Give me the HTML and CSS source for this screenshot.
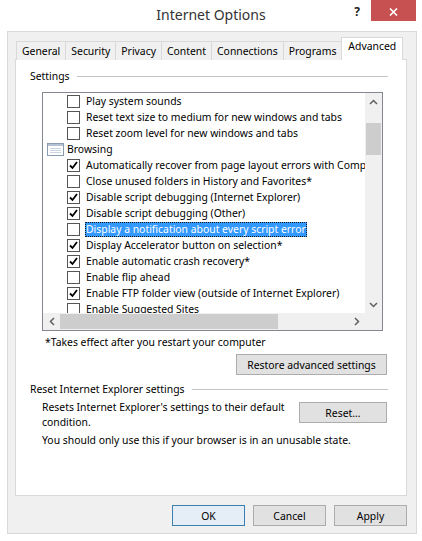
FILE: index.html
```html
<!DOCTYPE html>
<html lang="en">
<head>
    <meta charset="UTF-8">
    <title>Internet Options</title>
    <link rel="stylesheet" href="styles.css">
</head>
<body>
    <div class="window">
        <div class="titlebar">
            <div></div>
            <div class="title">Internet Options</div>
            <div class="caption">
                <span class="help">?</span>
                <span class="close">
                    <svg width="9" height="8" viewBox="0 0 9 8"><path d="M1 0.5 L8 7.5 M8 0.5 L1 7.5" stroke="#fff" stroke-width="1.6" fill="none"/></svg>
                </span>
            </div>
        </div>

        <div class="client">
            <div class="tabs">
                <div class="tab">General</div>
                <div class="tab">Security</div>
                <div class="tab">Privacy</div>
                <div class="tab">Content</div>
                <div class="tab">Connections</div>
                <div class="tab">Programs</div>
                <div class="tab active">Advanced</div>
            </div>

            <div class="panel">
                <div class="group-label"><span>Settings</span><span class="rule"></span></div>

                <div class="listbox">
                    <div class="items">
                        <div class="row opt"><span class="check"></span><span class="text">Play system sounds</span></div>
                        <div class="row opt"><span class="check"></span><span class="text">Reset text size to medium for new windows and tabs</span></div>
                        <div class="row opt"><span class="check"></span><span class="text">Reset zoom level for new windows and tabs</span></div>
                        <div class="row group">
                            <svg class="folder" width="17" height="13" viewBox="0 0 17 13">
                                <rect x="0.5" y="0.5" width="16" height="12" fill="#fff" stroke="#8b9cb2"/>
                                <rect x="1" y="1" width="15" height="2" fill="#b4c2d4"/>
                                <path d="M3 5.5 H14 M3 7.5 H14 M3 9.5 H14" stroke="#c9d4e2"/>
                            </svg>
                            <span class="text">Browsing</span>
                        </div>
                        <div class="row opt"><span class="check on"></span><span class="text">Automatically recover from page layout errors with Compatibility View</span></div>
                        <div class="row opt"><span class="check"></span><span class="text">Close unused folders in History and Favorites*</span></div>
                        <div class="row opt"><span class="check on"></span><span class="text">Disable script debugging (Internet Explorer)</span></div>
                        <div class="row opt"><span class="check on"></span><span class="text">Disable script debugging (Other)</span></div>
                        <div class="row opt"><span class="check"></span><span class="text selected">Display a notification about every script error</span></div>
                        <div class="row opt"><span class="check on"></span><span class="text">Display Accelerator button on selection*</span></div>
                        <div class="row opt"><span class="check on"></span><span class="text">Enable automatic crash recovery*</span></div>
                        <div class="row opt"><span class="check"></span><span class="text">Enable flip ahead</span></div>
                        <div class="row opt"><span class="check on"></span><span class="text">Enable FTP folder view (outside of Internet Explorer)</span></div>
                        <div class="row opt"><span class="check"></span><span class="text">Enable Suggested Sites</span></div>
                    </div>

                    <div class="vscroll">
                        <span class="arrow"><svg width="9" height="6" viewBox="0 0 9 6"><path d="M1 5 L4.5 1.5 L8 5" stroke="#606060" stroke-width="1.5" fill="none"/></svg></span>
                        <div class="track"><div class="vthumb"></div></div>
                        <span class="arrow"><svg width="9" height="6" viewBox="0 0 9 6"><path d="M1 1 L4.5 4.5 L8 1" stroke="#606060" stroke-width="1.5" fill="none"/></svg></span>
                    </div>

                    <div class="hscroll">
                        <span class="arrow"><svg width="6" height="9" viewBox="0 0 6 9"><path d="M5 1 L1.5 4.5 L5 8" stroke="#606060" stroke-width="1.5" fill="none"/></svg></span>
                        <div class="track"><div class="hthumb"></div></div>
                        <span class="arrow"><svg width="6" height="9" viewBox="0 0 6 9"><path d="M1 1 L4.5 4.5 L1 8" stroke="#606060" stroke-width="1.5" fill="none"/></svg></span>
                    </div>
                    <div class="corner"></div>
                </div>

                <p class="note">*Takes effect after you restart your computer</p>
                <div class="restore-row">
                    <button class="btn restore">Restore advanced settings</button>
                </div>

                <div class="group-label reset-label"><span>Reset Internet Explorer settings</span><span class="rule"></span></div>
                <div class="reset-row">
                    <p class="desc">Resets Internet Explorer's settings to their default condition.</p>
                    <button class="btn reset">Reset...</button>
                </div>
                <p class="warn">You should only use this if your browser is in an unusable state.</p>
            </div>

            <div class="actions">
                <button class="btn default">OK</button>
                <button class="btn">Cancel</button>
                <button class="btn">Apply</button>
            </div>
        </div>
    </div>
</body>
</html>
```

FILE: styles.css
```css
body { margin: 0; background: #fff; font-family: "Segoe UI", "Noto Sans", sans-serif; font-size: 10.4px; color: #000; }
p { margin: 0; }
.window { width: 422px; height: 541px; }

.titlebar { height: 31px; display: grid; grid-template-columns: 1fr auto 1fr; }
.title { font-size: 14px; color: #333; line-height: 30px; }
.caption { display: flex; justify-content: flex-end; align-items: flex-start; }
.help { font-weight: bold; font-size: 12px; color: #222; line-height: 24px; margin-right: 11px; }
.close { width: 45px; height: 21px; background: #c75050; display: flex; align-items: center; justify-content: center; margin-right: 6px; padding-top: 2px; box-sizing: border-box; }

.client { margin-left: 7px; width: 410px; height: 503px; box-sizing: border-box; border: 1px solid #d9d9d9; background: #f0f0f0; padding: 6px 9px 0 7px; }

.tabs { display: flex; align-items: flex-end; height: 22px; margin-left: 1px; margin-bottom: -1px; position: relative; }
.tab { height: 19px; box-sizing: border-box; border: 1px solid #d9d9d9; border-bottom: none; background: #f0f0f0; padding: 0 5px; line-height: 18px; margin-right: -1px; }
.tab.active { height: 23px; background: #fff; padding: 0 6px; line-height: 17px; }

.panel { width: 392px; height: 437px; box-sizing: border-box; border: 1px solid #d9d9d9; background: #fff; padding: 8px 18px 0 14px; }

.group-label { display: flex; align-items: center; line-height: 16px; }
.group-label .rule { flex: 1; border-top: 1px solid #c4c4c4; margin-left: 7px; }

.listbox { width: 341px; height: 239px; box-sizing: border-box; border: 1px solid #828790; margin: 8px 0 0 12px; display: grid; grid-template-columns: 1fr 17px; grid-template-rows: 1fr 17px; }
.items { overflow: hidden; }
.row { height: 16px; display: flex; align-items: center; white-space: nowrap; }
.row.group { padding-left: 4px; }
.row.group .folder { margin-right: 3px; }
.row.opt { padding-left: 24px; }
.check { width: 13px; height: 13px; box-sizing: border-box; border: 1px solid #555; background: #fff; margin-right: 6px; flex: none; }
.check.on { background: #fff url("data:image/svg+xml,%3Csvg xmlns='http://www.w3.org/2000/svg' width='11' height='11'%3E%3Cpath d='M2 5.5 L4.5 8 L9 2' stroke='%23000' stroke-width='1.8' fill='none'/%3E%3C/svg%3E") center no-repeat; }
.text.selected { background: #3399ff; color: #fff; outline: 1px dotted #1a1a1a; outline-offset: -1px; padding: 0 1px; margin-left: -1px; line-height: 15px; }

.vscroll { display: flex; flex-direction: column; background: #f0f0f0; }
.vscroll .arrow, .hscroll .arrow { width: 17px; height: 17px; flex: none; display: flex; align-items: center; justify-content: center; }
.vscroll .track { flex: 1; padding-top: 13px; }
.vthumb { height: 32px; margin: 0 1px; background: #cdcdcd; }
.hscroll { display: flex; background: #f0f0f0; }
.hscroll .track { flex: 1; display: flex; align-items: stretch; padding: 1px 0; }
.hthumb { width: 218px; background: #cdcdcd; }
.corner { background: #f0f0f0; }

.note { margin: 3px 0 0 15px; line-height: 16px; }
.restore-row { display: flex; justify-content: flex-end; margin: 4px 1px 0 0; }

.btn { height: 21px; box-sizing: border-box; border: 1px solid #acacac; background: #e1e1e1; font: inherit; color: #000; padding: 0; }
.btn.restore { width: 151px; }
.btn.reset { width: 88px; margin-top: 2px; }
.btn.default { border-color: #3c7fb1; background: #e5eef6; }

.reset-label { margin-top: 6px; }
.reset-row { display: flex; justify-content: space-between; align-items: flex-start; margin: 3px 1px 0 12px; }
.desc { width: 250px; line-height: 15px; }
.warn { margin: 2px 0 0 12px; line-height: 16px; }

.actions { display: flex; justify-content: flex-end; gap: 8px; margin-top: 9px; }
.actions .btn { width: 73px; }
```
